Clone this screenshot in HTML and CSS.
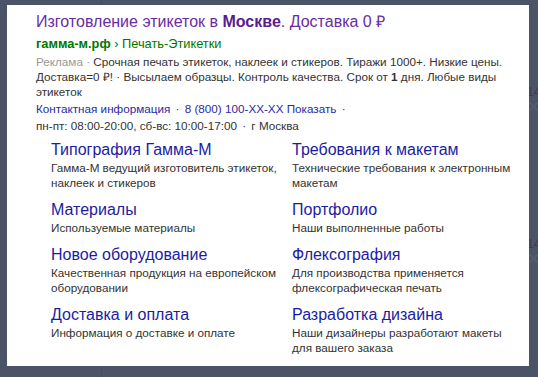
FILE: index.html
```html
<!DOCTYPE html>
<html lang="ru">
<head>
    <meta charset="UTF-8">
    <title>Реклама</title>
    <link rel="stylesheet" href="styles.css">
</head>
<body>
<div class="behind behind-1">14<br><span>ос</span></div>
<div class="behind behind-2">14<br><span>ос</span></div>
<div class="card">
    <div class="title"><a href="#">Изготовление этикеток в <b>Москве</b>. Доставка 0 ₽</a></div>
    <div class="path"><b>гамма-м.рф</b> › Печать-Этикетки</div>
    <div class="text">
        <span class="label">Реклама ·</span> Срочная печать этикеток, наклеек и стикеров. Тиражи 1000+. Низкие цены. Доставка=0 ₽! · Высылаем образцы. Контроль качества. Срок от <b>1</b> дня. Любые виды этикеток
    </div>
    <div class="contacts">
        <a href="#">Контактная информация</a> <span class="dot">·</span> <a href="#">8 (800) 100-XX-XX Показать</a> <span class="dot">·</span>
    </div>
    <div class="hours">пн-пт: 08:00-20:00, сб-вс: 10:00-17:00 <span class="dot">·</span> г Москва</div>

    <div class="sitelinks">
        <div class="item">
            <a href="#">Типография Гамма-М</a>
            <p>Гамма-М ведущий изготовитель этикеток, наклеек и стикеров</p>
        </div>
        <div class="item">
            <a href="#">Требования к макетам</a>
            <p>Технические требования к электронным макетам</p>
        </div>
        <div class="item">
            <a href="#">Материалы</a>
            <p>Используемые материалы</p>
        </div>
        <div class="item">
            <a href="#">Портфолио</a>
            <p>Наши выполненные работы</p>
        </div>
        <div class="item">
            <a href="#">Новое оборудование</a>
            <p>Качественная продукция на европейском оборудовании</p>
        </div>
        <div class="item">
            <a href="#">Флексография</a>
            <p>Для производства применяется флексографическая печать</p>
        </div>
        <div class="item">
            <a href="#">Доставка и оплата</a>
            <p>Информация о доставке и оплате</p>
        </div>
        <div class="item">
            <a href="#">Разработка дизайна</a>
            <p>Наши дизайнеры разработают макеты для вашего заказа</p>
        </div>
    </div>
</div>
</body>
</html>
```

FILE: styles.css
```css
*{
    margin: 0;
    padding: 0;
}
html,body{
    height: 100%;
}
body{
    background: #4b5367 linear-gradient(90deg, transparent 101px, #454c5f 101px, #454c5f 102px, transparent 102px);
    font-family: "Liberation Sans", Arial, sans-serif;
    color: #333;
    padding: 5px 0 0 7px;
    box-sizing: border-box;
    position: relative;
}
a{
    text-decoration: none;
}
/* куски страницы под карточкой */
.behind{
    position: absolute;
    left: 527px;
    font-size: 12px;
    line-height: 14px;
    color: #363d4e;
}
.behind span{
    color: #5a6274;
}
.behind-1{
    top: 85px;
}
.behind-2{
    top: 237px;
}
.card{
    position: relative;
    width: 522px;
    height: 361px;
    background: #fff;
    padding: 7px 0 0 29px;
    box-sizing: border-box;
}
.title{
    font-size: 16px;
    line-height: 20px;
}
.title a{
    color: #6a2ca1;
}
.title b{
    color: #5b1c8e;
}
.path{
    margin-top: 3px;
    font-size: 12.8px;
    line-height: 17px;
    color: #070;
}
.text{
    margin-top: 2px;
    font-size: 11.7px;
    line-height: 15px;
    width: 475px;
}
.label{
    color: #999;
}
.contacts{
    margin-top: 1px;
    font-size: 11.7px;
    line-height: 17px;
}
.contacts a{
    color: #2a2aa3;
}
.dot{
    color: #333;
    padding: 0 2px;
}
.hours{
    font-size: 11.7px;
    line-height: 17px;
}
.sitelinks{
    display: grid;
    grid-template-columns: 241px 230px;
    row-gap: 10px;
    margin: 6px 0 0 15px;
}
.item a{
    display: block;
    font-size: 16px;
    line-height: 20px;
    color: #1c1ca3;
}
.item p{
    font-size: 11.7px;
    line-height: 15px;
    width: 228px;
}
```
